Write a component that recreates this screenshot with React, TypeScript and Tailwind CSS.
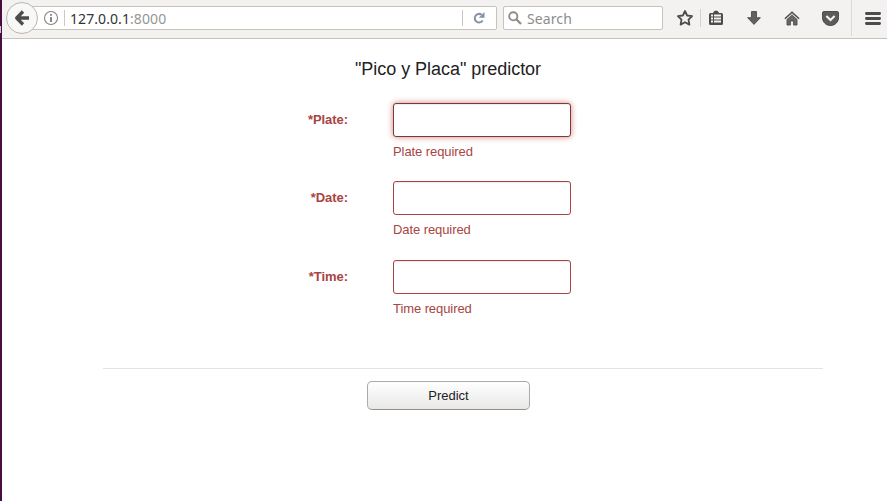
import React from "react";

const INK = "#4c4c4c";

function BackIcon() {
  return (
    <svg width="16" height="16" viewBox="0 0 16 16" fill="none" stroke={INK} strokeWidth="3.3">
      <path d="M9 1.5 2.7 8 9 14.5M3 8h12" strokeLinejoin="round" />
    </svg>
  );
}

function InfoIcon() {
  return (
    <svg width="16" height="16" viewBox="0 0 16 16" fill="none">
      <circle cx="8" cy="8" r="6.5" stroke="#858585" strokeWidth="1.1" />
      <path d="M8 7v5M8 4v1.7" stroke="#6c6c6c" strokeWidth="1.6" />
    </svg>
  );
}

function ReloadIcon() {
  return (
    <svg width="12" height="12" viewBox="0 0 12 12" fill="none">
      <path d="M9.7 8.5A4.3 4.3 0 1 1 8.6 2.7" stroke="#8492a3" strokeWidth="2" />
      <path d="M11.5 0v5.7H5.8z" fill="#8492a3" />
    </svg>
  );
}

function SearchIcon() {
  return (
    <svg width="14" height="14" viewBox="0 0 14 14" fill="none" stroke="#8c8c8c">
      <circle cx="5.3" cy="5.3" r="4.1" strokeWidth="1.9" />
      <path d="m8.3 8.3 4.7 4.7" strokeWidth="2.3" />
    </svg>
  );
}

function StarIcon() {
  return (
    <svg width="18" height="18" viewBox="0 0 18 18" fill="none" stroke={INK} strokeWidth="1.8" strokeLinejoin="round">
      <path d="m9 2 2.1 4.5 5 .6-3.6 3.5.9 5L9 13.2l-4.4 2.4.9-5L1.9 7.1l5-.6z" />
    </svg>
  );
}

function ClipboardIcon() {
  return (
    <svg width="14" height="16" viewBox="0 0 14 16">
      <path d="M1.5 3H4l1-1.7L7 .6l2 .7L10 3h2.5A1.5 1.5 0 0 1 14 4.5v9a1.5 1.5 0 0 1-1.5 1.5h-11A1.5 1.5 0 0 1 0 13.5v-9A1.5 1.5 0 0 1 1.5 3z" fill={INK} />
      <path d="M2 5.500h2M2 8.500h2M2 11.500h2M5 5.500h7M5 8.500h7M5 11.500h7" stroke="#f3f2f0" strokeWidth="1.8" />
    </svg>
  );
}

function DownloadIcon() {
  return (
    <svg width="14" height="14" viewBox="0 0 14 14">
      <path d="M4.5.5h5v6.2h3.9L7 13.4.6 6.7h3.9z" fill="#606060" stroke={INK} strokeWidth=".9" strokeLinejoin="round" />
    </svg>
  );
}

function HomeIcon() {
  return (
    <svg width="16" height="15" viewBox="0 0 16 15">
      <path d="M3 8.1 8 3.6l5 4.5V14H9.6v-4H6.4v4H3z" fill="#686868" stroke={INK} strokeWidth=".9" />
      <path d="m2 8.7 6-5.5 6 5.5" fill="none" stroke="#e4e3e1" strokeWidth=".7" />
      <path d="M.9 7.7 8 1.2l7.1 6.5" fill="none" stroke={INK} strokeWidth="1.5" />
    </svg>
  );
}

function PocketIcon() {
  return (
    <svg width="17" height="15" viewBox="0 0 17 15">
      <path d="M2 .5h13A1.5 1.5 0 0 1 16.5 2v4.500c0 4.500-3.500 8-8 8s-8-3.500-8-8V2A1.500 1.500 0 0 1 2 .5z" fill="#5c5c5c" stroke={INK} />
      <path d="m4.400 5.100 4.100 4 4.100-4" fill="none" stroke="#f5f5f4" strokeWidth="2.1" />
    </svg>
  );
}

function MenuIcon() {
  return (
    <svg width="16" height="13" viewBox="0 0 16 13" stroke={INK} strokeWidth="2.8" strokeLinecap="round">
      <path d="M1.4 1.5h13.2M1.4 6.5h13.2M1.4 11.5h13.2" />
    </svg>
  );
}

function Toolbar() {
  return (
    <header className="flex h-[39px] items-start border-b border-[#c8c2bb] bg-[#f3f2f0]">
      <div className="z-10 ml-1 mt-[2px] flex size-8 shrink-0 items-center justify-center rounded-full border border-[#bdb6af] bg-[#f8f8f7]">
        <BackIcon />
      </div>
      <div className="-ml-2 mt-[6px] flex h-6 w-[467px] shrink-0 items-center rounded-r-[2px] border border-l-0 border-[#c8c2bb] bg-white pl-[13px] font-['Noto_Sans','Open_Sans',sans-serif] text-[14px]">
        <InfoIcon />
        <div className="ml-[5px] h-4 w-px bg-[#c9c9c9]" />
        <div className="ml-[5px] mt-[2px] leading-5 tracking-[0.08px] text-[#333]">
          127.0.0.1<span className="text-[#969696]">:8000</span>
        </div>
        <div className="ml-auto mr-[10px] h-4 w-px bg-[#c6c6c6]" />
        <div className="mr-[11px]">
          <ReloadIcon />
        </div>
      </div>
      <div className="ml-[6px] mt-[6px] flex h-6 w-[160px] shrink-0 items-center gap-[5px] rounded-[2px] border border-[#c8c2bb] bg-white pl-1 font-['Noto_Sans','Open_Sans',sans-serif] text-[14px] text-[#8c8c8c]">
        <SearchIcon />
        <span className="mt-[2px] leading-5 tracking-[0.1px]">Search</span>
      </div>
      <div className="flex h-[36px] items-center">
        <div className="ml-[13px]"><StarIcon /></div>
        <div className="ml-[6px] h-[18px] w-px bg-[#d4d2cf]" />
        <div className="ml-2"><ClipboardIcon /></div>
        <div className="ml-[24px]"><DownloadIcon /></div>
        <div className="ml-[23px]"><HomeIcon /></div>
        <div className="ml-[22px]"><PocketIcon /></div>
        <div className="ml-[12px] h-[36px] w-px bg-[#dddbd8]" />
        <div className="ml-[13px]"><MenuIcon /></div>
      </div>
    </header>
  );
}

function Field({ name, focused = false }: { name: string; focused?: boolean }) {
  return (
    <div className="flex text-[13px] text-[#a94442]">
      <label htmlFor={name} className="w-[245px] pt-[7px] text-right font-bold leading-5 tracking-[-0.06px]">
        *{name}:
      </label>
      <div className="ml-[45px]">
        <input
          id={name}
          className={
            focused
              ? "block h-[34px] w-[178px] rounded-[3px] border border-[#843534] bg-white px-2 shadow-[inset_0_1px_1px_rgba(0,0,0,0.075),0_0_6px_#ce8483] outline-none"
              : "block h-[34px] w-[178px] rounded-[3px] border border-[#a94442] bg-white px-2 shadow-[inset_0_1px_1px_rgba(0,0,0,0.075)] outline-none"
          }
        />
        <p className="mt-[5px] leading-5 tracking-[-0.08px]">{name} required</p>
      </div>
    </div>
  );
}

export default function App() {
  return (
    <div className="flex h-[501px] w-[887px] overflow-hidden bg-white font-['Liberation_Sans',Arial,sans-serif]">
      <div className="w-[2px] shrink-0 bg-[#480b42]">
        <div className="mt-[26px] h-[7px] w-px bg-[#c9c1c7]" />
      </div>
      <div className="w-[885px] shrink-0">
        <Toolbar />
        <main className="ml-[101px] w-[720px]">
          <h1 className="w-[690px] pt-[18px] text-center text-[18px] leading-6 tracking-[-0.03px] text-[#222]">
            "Pico y Placa" predictor
          </h1>
          <form className="pt-[22px]" onSubmit={(event) => event.preventDefault()}>
            <Field name="Plate" focused />
            <div className="mt-[19px]"><Field name="Date" /></div>
            <div className="mt-[20px]"><Field name="Time" /></div>
            <hr className="mt-[49px] border-[#e3e3e3]" />
            <button className="ml-[264px] mt-3 block h-[29px] w-[163px] rounded-[5px] border border-[#aaa] border-b-[#8f8f8f] bg-linear-to-b from-white to-[#e9e8e7] text-[13px] leading-5 text-[#222]">
              Predict
            </button>
          </form>
        </main>
      </div>
    </div>
  );
}
